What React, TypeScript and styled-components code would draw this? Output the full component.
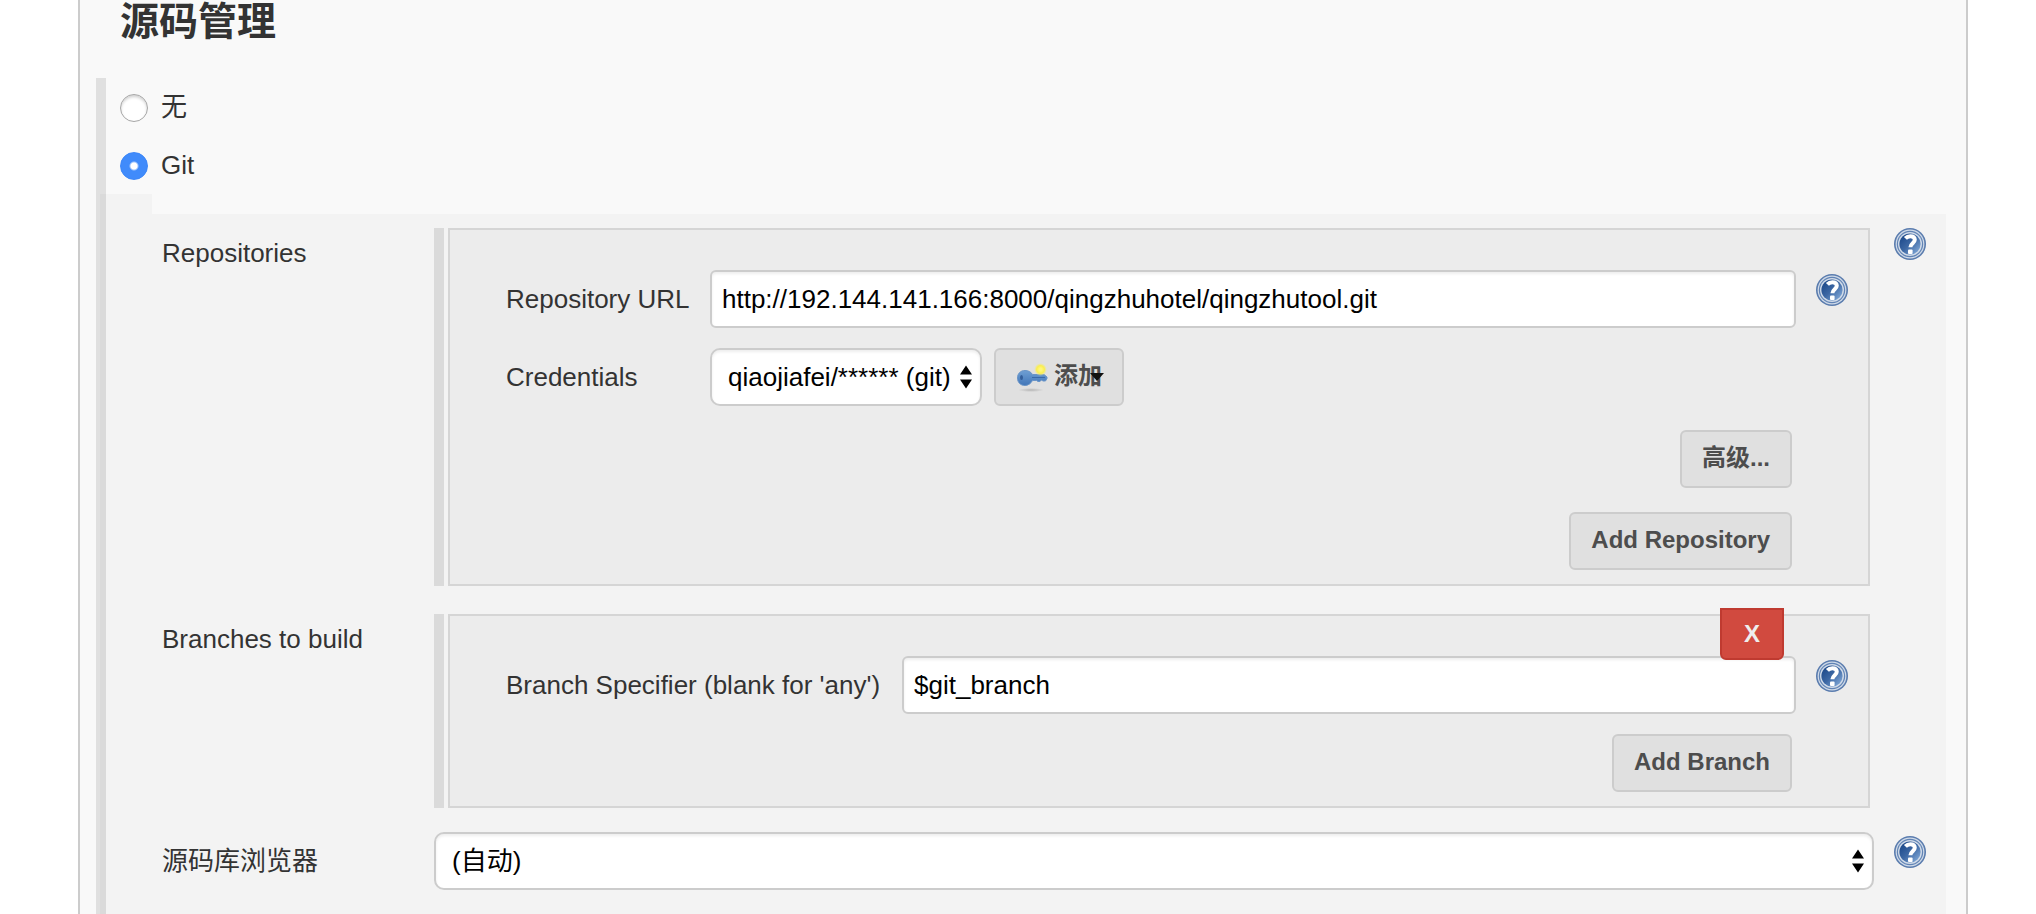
import React, { useState } from "react";
import styled, { createGlobalStyle, css } from "styled-components";

const GlobalStyle = createGlobalStyle`
  *, *::before, *::after { box-sizing: border-box; }
  body {
    margin: 0;
    background: #fff;
    color: #333;
    font: 26px/50px "Liberation Sans", "Noto Sans CJK SC", sans-serif;
  }
  input, select, button { font: inherit; margin: 0; }
`;

const Panel = styled.main`
  display: flex;
  flex-direction: column;
  min-height: 100vh;
  margin: 0 68px 0 78px;
  padding: 0 20px 0 16px;
  border: solid #ccc;
  border-width: 0 2px;
  background: #f9f9f9;
`;

const Heading = styled.h1`
  margin: 0 0 34px;
  padding-left: 24px;
  font-size: 39px;
  line-height: 44px;
  font-weight: 700;
`;

const ScmOptions = styled.div`
  display: flex;
  flex-direction: column;
  align-items: flex-start;
  gap: 30px;
  padding: 16px 0 14px 14px;
  border-left: 10px solid #e0e0e0;
`;

const Option = styled.label`
  display: flex;
  align-items: center;
  gap: 13px;
  line-height: 28px;
`;

const OptionText = styled.span`
  padding-bottom: 2px;
  line-height: 26px;
`;

const Radio = styled.input`
  appearance: none;
  width: 28px;
  height: 28px;
  border: 1px solid #a6a6a6;
  border-radius: 50%;
  background: #fff;
  box-shadow: inset 0 2px 3px rgba(0, 0, 0, 0.18);

  &:checked {
    border-color: #3b86f8;
    background: radial-gradient(circle, #fff 3px, #408bfb 5px);
    box-shadow: none;
  }
`;

const Settings = styled.div`
  display: flex;
  flex: 1;
  border-left: 4px solid #e0e0e0;
`;

const SettingsBody = styled.div`
  flex: 1;
  min-width: 0;
  padding-bottom: 24px;
  border-left: 6px solid #dadada;
  background: #f3f3f3;
`;

const Notch = styled.div`
  height: 20px;
  margin: 0 0 14px 46px;
  background: #f9f9f9;
`;

const SettingRow = styled.div<{ $gap?: number }>`
  display: grid;
  grid-template-columns: 252px minmax(0, 1fr) 32px;
  align-items: start;
  column-gap: 20px;
  margin-top: ${(p) => p.$gap ?? 0}px;
  padding: 0 20px 0 56px;
`;

const SettingName = styled.label`
  white-space: nowrap;
`;

const SelectName = styled(SettingName)`
  align-self: center;
`;

const Chunk = styled.section`
  display: flex;
  gap: 4px;
  margin-right: 4px;

  &::before {
    content: "";
    width: 10px;
    background: #dadada;
  }
`;

const ChunkBody = styled.div`
  position: relative;
  display: flex;
  flex: 1;
  flex-direction: column;
  gap: 20px;
  min-width: 0;
  padding: 40px 20px 14px 56px;
  border: 2px solid #d5d5d5;
  background: #ececec;
`;

const FieldRow = styled.div<{ $labelWidth: number }>`
  display: grid;
  grid-template-columns: ${(p) => p.$labelWidth}px minmax(0, 1fr) 32px;
  align-items: start;
  column-gap: 20px;
`;

const FieldName = styled.label`
  line-height: 58px;
  white-space: nowrap;
`;

const control = css`
  height: 58px;
  border: 2px solid #ccc;
  background: #fff;
  color: #000;
  box-shadow: inset 0 2px 3px rgba(0, 0, 0, 0.07);
`;

const TextInput = styled.input`
  ${control}
  width: 100%;
  padding: 0 10px;
  border-radius: 6px;
`;

const SelectBox = styled.div<{ $wide?: boolean }>`
  position: relative;
  width: ${(p) => (p.$wide ? "100%" : "auto")};

  svg {
    position: absolute;
    top: 17px;
    right: 10px;
    pointer-events: none;
  }
`;

const SelectControl = styled.select`
  ${control}
  display: block;
  appearance: none;
  width: 100%;
  padding: 0 29px 0 16px;
  border-radius: 10px;
`;

const Inline = styled.div`
  display: flex;
  gap: 12px;
`;

const Actions = styled.div<{ $spaced?: boolean }>`
  display: flex;
  flex-direction: column;
  align-items: flex-end;
  gap: 24px;
  margin-top: ${(p) => (p.$spaced ? 4 : 0)}px;
  padding-right: 56px;
`;

const Button = styled.button`
  position: relative;
  display: flex;
  align-items: center;
  gap: 6px;
  height: 58px;
  padding: 0 20px 2px;
  border: 2px solid #ccc;
  border-radius: 6px;
  background: #e0e0e0;
  color: #4d4d4d;
  font-size: 24px;
  line-height: 26px;
  font-weight: 700;
  white-space: nowrap;
`;

const Caret = styled.svg`
  position: absolute;
  top: 23px;
  right: 18px;
`;

const DeleteButton = styled.button`
  position: absolute;
  top: -8px;
  right: 84px;
  width: 64px;
  height: 52px;
  padding: 0;
  border: 2px solid #bf3a30;
  border-radius: 0 0 6px 6px;
  background: #d14a3f;
  color: #eee;
  font-size: 24px;
  line-height: 26px;
  font-weight: 700;
`;

const HelpLink = styled.a<{ $field?: boolean }>`
  display: block;
  height: 32px;
  margin-top: ${(p) => (p.$field ? 4 : 0)}px;

  svg { display: block; }
`;

function Help({ topic, field }: { topic: string; field?: boolean }) {
  return (
    <HelpLink href="#help" aria-label={`Help: ${topic}`} $field={field}>
      <svg width="32" height="32" viewBox="0 0 32 32" aria-hidden="true">
        <defs>
          <linearGradient id="helpFill" x1="0" y1="0.1" x2="0.9" y2="1">
            <stop offset="0.15" stopColor="#234f8f" />
            <stop offset="0.5" stopColor="#3d68a4" />
            <stop offset="1" stopColor="#86addb" />
          </linearGradient>
        </defs>
        <circle cx="16" cy="16" r="16" fill="#5a7cae" />
        <circle cx="16" cy="16" r="14.4" fill="#d0dae8" />
        <circle cx="16" cy="16" r="13.2" fill="#6184b5" />
        <circle cx="16" cy="16" r="12" fill="#d0dae8" />
        <circle cx="16" cy="16" r="10.6" fill="url(#helpFill)" />
        <path
          d="M11.4 10.400C12.800 8.800 14.600 8.200 16.400 8.200c2.800 0 4.400 1.400 4.400 3.600 0 3.200-4.400 3.600-4.400 7.400"
          fill="none"
          stroke="#fff"
          strokeWidth="4"
        />
        <rect x="14" y="21.4" width="4.600" height="4.600" rx="1" fill="#fff" />
      </svg>
    </HelpLink>
  );
}

function UpDown() {
  return (
    <svg width="12" height="24" viewBox="0 0 12 24" aria-hidden="true">
      <path d="M6 .5 12 9.500H0zM6 23.500 12 14.500H0z" fill="#000" />
    </svg>
  );
}

function KeyIcon() {
  return (
    <svg width="32" height="32" viewBox="0 0 32 32" aria-hidden="true">
      <defs>
        <radialGradient id="spark">
          <stop offset="0.2" stopColor="#fff67a" />
          <stop offset="0.6" stopColor="#faee4e" />
          <stop offset="1" stopColor="#f0e98c" stopOpacity="0" />
        </radialGradient>
        <radialGradient id="keyShadow">
          <stop offset="0" stopColor="#999" stopOpacity="0.6" />
          <stop offset="1" stopColor="#999" stopOpacity="0" />
        </radialGradient>
        <linearGradient id="keyBlue" x1="0" y1="0" x2="0" y2="1">
          <stop offset="0" stopColor="#6f9fd3" />
          <stop offset="1" stopColor="#4276b8" />
        </linearGradient>
      </defs>
      <ellipse cx="15" cy="30" rx="13" ry="2" fill="url(#keyShadow)" />
      <path
        d="M9 10.500c3.500 0 6 1.500 7.500 4h11.500l3 2.500v1.500l-1.500 2.500h-2.500l-1.500-1-1.500 1.500h-2l-1.500-1h-4c-1.500 3-4.500 5-7.500 5-4.500 0-7.500-3-7.500-7.500s3-7.500 7.500-7.500z"
        fill="url(#keyBlue)"
        stroke="#6a95c8"
        strokeWidth="1"
      />
      <ellipse cx="5.500" cy="17.500" rx="1.500" ry="2.500" fill="#345f9b" />
      <path d="M16 17.500h13" stroke="#3a69a8" strokeWidth="1" />
      <circle cx="24.500" cy="9.500" r="6.500" fill="url(#spark)" />
    </svg>
  );
}

export default function App() {
  const [scm, setScm] = useState("git");

  return (
    <>
      <GlobalStyle />
      <Panel>
        <Heading>源码管理</Heading>
        <ScmOptions role="radiogroup" aria-label="源码管理">
          <Option>
            <Radio type="radio" name="scm" checked={scm === "none"} onChange={() => setScm("none")} />
            <OptionText>无</OptionText>
          </Option>
          <Option>
            <Radio type="radio" name="scm" checked={scm === "git"} onChange={() => setScm("git")} />
            <OptionText>Git</OptionText>
          </Option>
        </ScmOptions>

        <Settings>
          <SettingsBody>
            <Notch />

            <SettingRow>
              <SettingName as="span" id="repositories">Repositories</SettingName>
              <Chunk aria-labelledby="repositories">
                <ChunkBody>
                  <FieldRow $labelWidth={184}>
                    <FieldName htmlFor="url">Repository URL</FieldName>
                    <TextInput
                      id="url"
                      type="text"
                      defaultValue="http://192.144.141.166:8000/qingzhuhotel/qingzhutool.git"
                    />
                    <Help topic="Repository URL" field />
                  </FieldRow>
                  <FieldRow $labelWidth={184}>
                    <FieldName htmlFor="credentials">Credentials</FieldName>
                    <Inline>
                      <SelectBox>
                        <SelectControl id="credentials">
                          <option>qiaojiafei/****** (git)</option>
                        </SelectControl>
                        <UpDown />
                      </SelectBox>
                      <Button type="button">
                        <KeyIcon />
                        添加
                        <Caret width="14" height="8" viewBox="0 0 14 8" aria-hidden="true">
                          <path d="M0 0h14L7 8z" fill="#111" />
                        </Caret>
                      </Button>
                    </Inline>
                  </FieldRow>
                  <Actions $spaced>
                    <Button type="button">高级...</Button>
                    <Button type="button">Add Repository</Button>
                  </Actions>
                </ChunkBody>
              </Chunk>
              <Help topic="Repositories" />
            </SettingRow>

            <SettingRow $gap={28}>
              <SettingName as="span" id="branches">Branches to build</SettingName>
              <Chunk aria-labelledby="branches">
                <ChunkBody>
                  <FieldRow $labelWidth={376}>
                    <FieldName htmlFor="branch">Branch Specifier (blank for 'any')</FieldName>
                    <TextInput id="branch" type="text" defaultValue="$git_branch" />
                    <Help topic="Branch Specifier" field />
                  </FieldRow>
                  <Actions>
                    <Button type="button">Add Branch</Button>
                  </Actions>
                  <DeleteButton type="button">X</DeleteButton>
                </ChunkBody>
              </Chunk>
            </SettingRow>

            <SettingRow $gap={24}>
              <SelectName htmlFor="browser">源码库浏览器</SelectName>
              <SelectBox $wide>
                <SelectControl id="browser">
                  <option>(自动)</option>
                </SelectControl>
                <UpDown />
              </SelectBox>
              <Help topic="源码库浏览器" field />
            </SettingRow>
          </SettingsBody>
        </Settings>
      </Panel>
    </>
  );
}
